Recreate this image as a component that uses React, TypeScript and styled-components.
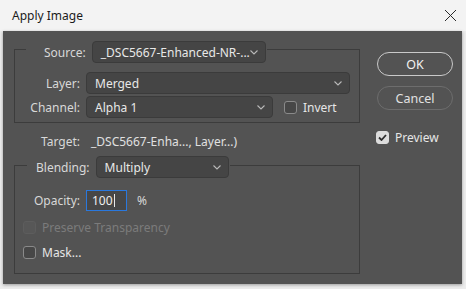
import React from "react";
import styled, { createGlobalStyle } from "styled-components";

const Global = createGlobalStyle`
  html, body { margin: 0; padding: 0; background: #eeeeee; }
  body { font-family: "Noto Sans", "Open Sans", sans-serif; font-size: 12px; }
  #root { width: 466px; height: 289px; overflow: hidden; }
`;

const Window = styled.div`
  width: 466px;
  height: 289px;
  display: flex;
  flex-direction: column;
  background: #ececec;
`;

const TitleBar = styled.div`
  height: 31px;
  flex: none;
  display: flex;
  align-items: center;
  justify-content: space-between;
  padding: 0 9px 0 12px;
  background: #f3f3f3;
  color: #1b1b1b;
  font-family: "Noto Sans", sans-serif;
  font-size: 12px;
`;

const CloseBtn = styled.div`
  width: 14px;
  height: 14px;
  display: flex;
  align-items: center;
  justify-content: center;
`;

const Body = styled.div`
  margin: 0 4px 0 3px;
  height: 253px;
  box-sizing: border-box;
  background: #535353;
  display: flex;
  padding: 18px 9px 9px 11px;
  gap: 17px;
  box-shadow: 0 1px 3px rgba(0, 0, 0, 0.35);
`;

const LeftCol = styled.div`
  width: 346px;
  display: flex;
  flex-direction: column;
`;

const RightCol = styled.div`
  width: 76px;
  display: flex;
  flex-direction: column;
  padding-top: 3px;
`;

const Group = styled.div<{ $pb: number }>`
  border: 1px solid #3c3c3c;
  display: flex;
  flex-direction: column;
  padding-bottom: ${(p) => p.$pb}px;
`;

const Legend = styled.div<{ $mt: number; $ml: number; $pl: number }>`
  display: flex;
  align-items: center;
  align-self: flex-start;
  background: #535353;
  margin: ${(p) => -p.$mt}px 0 0 ${(p) => p.$ml}px;
  padding: 0 1px 0 ${(p) => p.$pl}px;
  gap: 6px;
`;

const Label = styled.span<{ $w?: number }>`
  color: #d8d8d8;
  white-space: nowrap;
  ${(p) => (p.$w ? `width: ${p.$w}px; text-align: right; flex: none;` : "")}
`;

const Row = styled.div<{ $mt: number }>`
  display: flex;
  align-items: center;
  gap: 6px;
  margin-top: ${(p) => p.$mt}px;
`;

const Select = styled.div<{ $w: number }>`
  width: ${(p) => p.$w}px;
  height: 22px;
  box-sizing: border-box;
  flex: none;
  background: #454545;
  border: 1px solid #3b3b3b;
  border-radius: 4px;
  display: flex;
  align-items: center;
  justify-content: space-between;
  padding: 0 7px 0 8px;
  color: #e8e8e8;
  white-space: nowrap;
  overflow: hidden;
`;

const Chevron = () => (
  <svg width="8" height="5" viewBox="0 0 8 5" style={{ flex: "none" }}>
    <polyline points="0.5,0.5 4,4 7.5,0.5" fill="none" stroke="#b8b8b8" strokeWidth="1.1" />
  </svg>
);

const Check = styled.span<{ $state: "off" | "disabled" | "on" }>`
  width: 13px;
  height: 13px;
  box-sizing: border-box;
  flex: none;
  border-radius: 3px;
  display: flex;
  align-items: center;
  justify-content: center;
  border: 1px solid
    ${(p) => (p.$state === "disabled" ? "#5d5d5d" : p.$state === "on" ? "#dcdcdc" : "#8a8a8a")};
  background: ${(p) => (p.$state === "disabled" ? "#575757" : p.$state === "on" ? "#dcdcdc" : "#474747")};
`;

const CheckRow = styled.div<{ $mt: number; $ml: number; $dim?: boolean }>`
  display: flex;
  align-items: center;
  height: 16px;
  gap: 6px;
  margin-top: ${(p) => p.$mt}px;
  margin-left: ${(p) => p.$ml}px;
  color: ${(p) => (p.$dim ? "#7b7b7b" : "#e6e6e6")};
  white-space: nowrap;
`;

const TargetRow = styled.div`
  height: 16px;
  margin: 10px 0 16px;
  display: flex;
  align-items: center;
  gap: 11px;
`;

const Value = styled.span`
  color: #e0e0e0;
  white-space: nowrap;
`;

const Input = styled.div`
  width: 41px;
  height: 21px;
  box-sizing: border-box;
  border: 1px solid #2a78dd;
  background: #474747;
  display: flex;
  align-items: center;
  padding-left: 5px;
  color: #f0f0f0;
`;

const Caret = styled.span`
  width: 1px;
  height: 13px;
  background: #e8e8e8;
  margin-left: 1px;
`;

const Percent = styled.span`
  color: #d8d8d8;
  margin-left: 4px;
`;

const Button = styled.div<{ $primary?: boolean; $mt: number }>`
  height: 24px;
  box-sizing: border-box;
  border-radius: 12px;
  border: 1.5px solid ${(p) => (p.$primary ? "#c9c9c9" : "#6d6d6d")};
  display: flex;
  align-items: center;
  justify-content: center;
  color: ${(p) => (p.$primary ? "#f2f2f2" : "#e2e2e2")};
  margin-top: ${(p) => p.$mt}px;
  font-size: 12.5px;
`;

const PreviewRow = styled.div`
  display: flex;
  align-items: center;
  gap: 6px;
  margin-top: 19px;
  margin-left: -1px;
  color: #e6e6e6;
`;

export default function App() {
  return (
    <>
      <Global />
      <Window>
        <TitleBar>
          <span>Apply Image</span>
          <CloseBtn>
            <svg width="13" height="13" viewBox="0 0 13 13">
              <path d="M1 1 L12 12 M12 1 L1 12" stroke="#2a2a2a" strokeWidth="1" fill="none" />
            </svg>
          </CloseBtn>
        </TitleBar>
        <Body>
          <LeftCol>
            <Group $pb={4}>
              <Legend $mt={9} $ml={11} $pl={18}>
                <Label>Source:</Label>
                <Select $w={174}>
                  <span>_DSC5667-Enhanced-NR-...</span>
                  <Chevron />
                </Select>
              </Legend>
              <Row $mt={9}>
                <Label $w={65}>Layer:</Label>
                <Select $w={264}>
                  <span>Merged</span>
                  <Chevron />
                </Select>
              </Row>
              <Row $mt={2}>
                <Label $w={65}>Channel:</Label>
                <Select $w={187}>
                  <span>Alpha 1</span>
                  <Chevron />
                </Select>
                <CheckRow $mt={0} $ml={5}>
                  <Check $state="off" />
                  <span>Invert</span>
                </CheckRow>
              </Row>
            </Group>
            <TargetRow>
              <Label $w={66}>Target:</Label>
              <Value>_DSC5667-Enha..., Layer...)</Value>
            </TargetRow>
            <Group $pb={13}>
              <Legend $mt={10} $ml={12} $pl={9}>
                <Label>Blending:</Label>
                <Select $w={133}>
                  <span>Multiply</span>
                  <Chevron />
                </Select>
              </Legend>
              <Row $mt={12}>
                <Label $w={65}>Opacity:</Label>
                <Input>
                  <span>100</span>
                  <Caret />
                </Input>
                <Percent>%</Percent>
              </Row>
              <CheckRow $mt={8} $ml={8} $dim>
                <Check $state="disabled" />
                <span>Preserve Transparency</span>
              </CheckRow>
              <CheckRow $mt={9} $ml={8}>
                <Check $state="off" />
                <span>Mask...</span>
              </CheckRow>
            </Group>
          </LeftCol>
          <RightCol>
            <Button $primary $mt={0}>OK</Button>
            <Button $mt={10}>Cancel</Button>
            <PreviewRow>
              <Check $state="on">
                <svg width="9" height="7" viewBox="0 0 9 7">
                  <polyline points="1,3.5 3.5,6 8,1" fill="none" stroke="#2e2e2e" strokeWidth="1.8" />
                </svg>
              </Check>
              <span>Preview</span>
            </PreviewRow>
          </RightCol>
        </Body>
      </Window>
    </>
  );
}
